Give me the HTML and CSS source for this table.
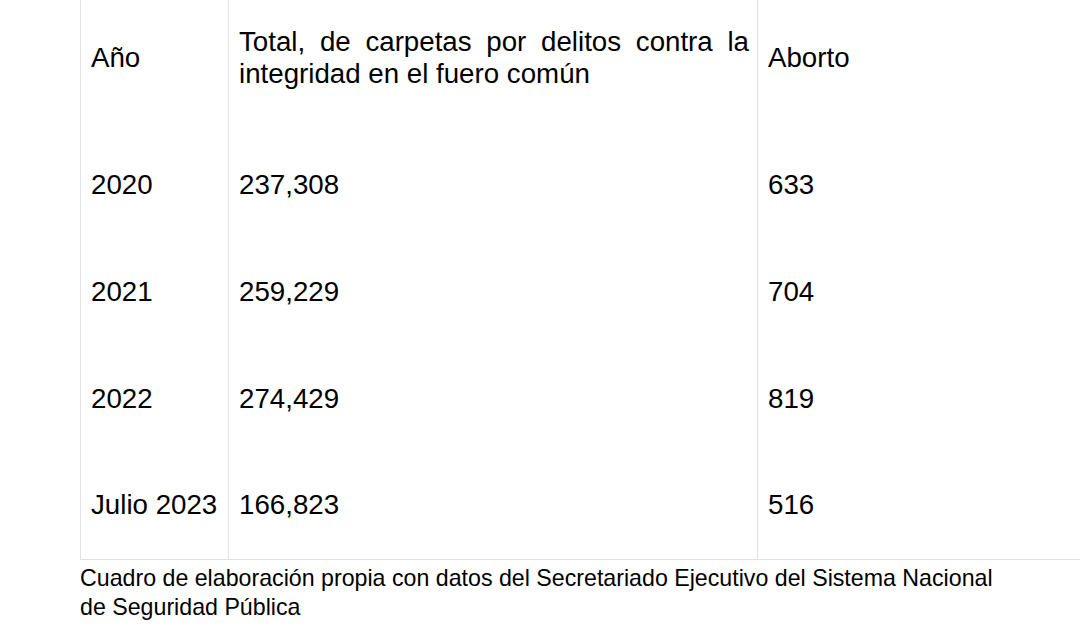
FILE: index.html
```html
<!DOCTYPE html>
<html lang="es">
<head>
<meta charset="utf-8">
<title>Tabla</title>
<link rel="stylesheet" href="styles.css">
</head>
<body>
<div class="page">
  <table class="data">
    <colgroup>
      <col class="c-year">
      <col class="c-total">
      <col class="c-abort">
    </colgroup>
    <thead>
      <tr class="head">
        <th class="h-low">Año</th>
        <th class="h-top">Total, de carpetas por delitos contra la integridad en el fuero común</th>
        <th class="h-low">Aborto</th>
      </tr>
    </thead>
    <tbody>
      <tr><td>2020</td><td>237,308</td><td>633</td></tr>
      <tr><td>2021</td><td>259,229</td><td>704</td></tr>
      <tr><td>2022</td><td>274,429</td><td>819</td></tr>
      <tr class="last"><td>Julio 2023</td><td>166,823</td><td>516</td></tr>
    </tbody>
  </table>
  <p class="caption">Cuadro de elaboración propia con datos del Secretariado Ejecutivo del Sistema Nacional de Seguridad Pública</p>
</div>
</body>
</html>
```

FILE: styles.css
```css
html, body {
  margin: 0;
  padding: 0;
  background: #ffffff;
  overflow: hidden;
}

body {
  width: 1080px;
  height: 631px;
  font-family: "Liberation Sans", Arial, sans-serif;
  color: #000000;
}

.page {
  width: 1000px;
  padding-left: 80px;
}

.data {
  border-collapse: collapse;
  table-layout: fixed;
  width: 1000px;
  font-size: 27.7px;
  line-height: 32px;
}

.c-year { width: 148px; }
.c-total { width: 529px; }
.c-abort { width: 323px; }

.data th,
.data td {
  border-left: 1px solid #e2e2e2;
  padding: 0 8px 0 10px;
  font-weight: normal;
  text-align: left;
}

.head th {
  height: 131px;
  vertical-align: top;
  box-sizing: border-box;
}

.head .h-low {
  padding-top: 42px;
}

.head .h-top {
  padding-top: 26px;
  text-align: justify;
}

.data tbody td {
  height: 107px;
  box-sizing: border-box;
  vertical-align: middle;
  white-space: nowrap;
}

.data .last td {
  border-bottom: 1px solid #e2e2e2;
}

.caption {
  margin: 4px 0 0 0;
  width: 925px;
  font-size: 23.2px;
  line-height: 29px;
}
```
